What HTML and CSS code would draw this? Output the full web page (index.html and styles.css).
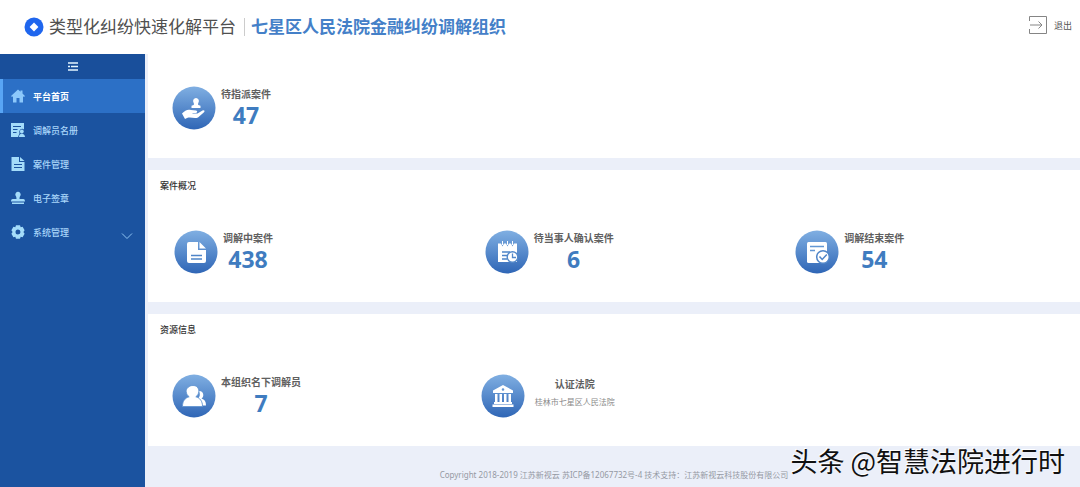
FILE: index.html
```
<!DOCTYPE html>
<html lang="zh-CN">
<head>
    <meta charset="UTF-8">
    <meta name="viewport" content="width=device-width, initial-scale=1.0">
    <title>类型化纠纷快速化解平台</title>
    <link rel="stylesheet" href="styles.css">
</head>
<body>

    <header class="header">
        <svg class="logo" viewBox="0 0 20 20">
            <circle cx="10" cy="10" r="9.5" fill="#1f66ee"/>
            <path d="M10 5.6 14.4 10 10 14.4 5.6 10Z" fill="#fff"/>
        </svg>
        <h1 class="title">类型化纠纷快速化解平台</h1>
        <span class="org">七星区人民法院金融纠纷调解组织</span>
        <a class="logout" href="#">
            <svg viewBox="0 0 18 18" fill="none" stroke="#858585">
                <path d="M.5 5V.5h17v17H.5V13M1 9h12M9.500 5.500 13 9l-3.500 3.500"/>
            </svg>
            退出
        </a>
    </header>

    <div class="layout">
        <aside class="sidebar">
            <button class="toggle" type="button" aria-label="收起菜单">
                <svg viewBox="0 0 10 9" fill="none" stroke="#e4f6ff" stroke-width="1.500">
                    <path d="M0 1h10M3 4.500h7M0 8h10M0 4.500h2"/>
                </svg>
            </button>
            <nav class="menu">
                <a class="menu-item active" href="#">
                    <svg viewBox="0 0 14 14">
                        <path d="M7 .5 0 7l1 1 1-.8V13.500h3.500V9h3v4.500H12V7.200l1 .8 1-1-2.500-2.400V1.500h-2v1.300Z"/>
                    </svg>
                    平台首页
                </a>
                <a class="menu-item" href="#">
                    <svg viewBox="0 0 14 14">
                        <path d="M0 0h13v6.500a3 3 0 0 0-4.500 3.700L7 14H0Z"/>
                        <circle cx="10.800" cy="8.500" r="1.900"/>
                        <path d="M8 14c0-2 .8-3.300 2.800-3.300S14 12 14 14Z"/>
                        <path d="M2 3.500h8M2 6.500h4.500M2 9.500h3.500" stroke="#1b53a0" stroke-width="1.200"/>
                    </svg>
                    调解员名册
                </a>
                <a class="menu-item" href="#">
                    <svg viewBox="0 0 14 14">
                        <path d="M.5 0H8v5h5.500v9H.5ZM9 0l4.500 4H9Z"/>
                        <path d="M3 7.500h8M3 10.500h8" stroke="#1b53a0" stroke-width="1.200"/>
                    </svg>
                    案件管理
                </a>
                <a class="menu-item" href="#">
                    <svg viewBox="0 0 14 14">
                        <path d="M7 .8a2.700 2.700 0 0 1 2.600 3.500C9 5.500 8.500 6 8.500 8h3.800c1 0 1.700.8 1.700 2.500H0C0 8.800.7 8 1.700 8h3.800c0-2-.5-2.500-1.100-3.700A2.700 2.700 0 0 1 7 .8ZM1 11.500h12V13H1Z"/>
                    </svg>
                    电子签章
                </a>
                <a class="menu-item" href="#">
                    <svg viewBox="0 0 14 14">
                        <path fill-rule="evenodd" d="M5 .3h4l.7 1.900 1.900-.4 2 3.400L12.400 7l1.200 1.800-2 3.400-1.900-.4L9 13.700H5l-.7-1.900-1.900.4-2-3.400L1.600 7 .4 5.200l2-3.400 1.900.4ZM7 4.500a2.500 2.500 0 1 0 0 5 2.500 2.500 0 0 0 0-5Z"/>
                    </svg>
                    系统管理
                    <svg class="arrow" viewBox="0 0 12 8">
                        <path d="m1 1.500 5 5 5-5"/>
                    </svg>
                </a>
            </nav>
        </aside>

        <!-- the round icons share this fill -->
        <svg class="defs">
            <linearGradient id="blue" x1="0" y1="0" x2="0" y2="1">
                <stop offset="0" stop-color="#80afe2"/>
                <stop offset="1" stop-color="#2f66b6"/>
            </linearGradient>
        </svg>

        <div class="content">
            <main class="panels">
                <section class="panel panel-first">
                    <div class="cards">
                        <div class="card">
                            <svg class="icon" viewBox="0 0 44 44">
                                <circle cx="22" cy="22" r="21.500" fill="url(#blue)"/>
                                <g fill="#fff">
                                    <path d="M24 12a3 3 0 0 1 2.500 4.500c-.6.900-.5 2-.2 2.500l2.200.8V22h-9v-2.200l2.200-.8c.3-.5.4-1.600-.2-2.500A3 3 0 0 1 24 12Z"/>
                                    <path d="M10 27.500c3-3.500 6-4.500 9-3.500l5 .5c1.800.3 1.500 2.300 0 2.400h-3.500v.6h5l5-3c1.600-.8 2.800.5 1.500 1.700L26 31.500c-4 1.500-7-1-11 .5l-2 1Z"/>
                                </g>
                            </svg>
                            <div class="info">
                                <div class="label">待指派案件</div>
                                <div class="count">47</div>
                            </div>
                        </div>
                    </div>
                </section>

                <section class="panel">
                    <h2 class="panel-title">案件概况</h2>
                    <div class="cards cards-wide">
                        <div class="card">
                            <svg class="icon" viewBox="0 0 44 44">
                                <circle cx="22" cy="22" r="21.500" fill="url(#blue)"/>
                                <path fill="#fff" d="M15 12h9v8h8v11a2 2 0 0 1-2 2H15a2 2 0 0 1-2-2V14a2 2 0 0 1 2-2ZM25.500 12l6.500 6.500h-6.500Z"/>
                                <path stroke="#4f85c8" stroke-width="1.500" d="M17 25.500h11M17 29h11"/>
                            </svg>
                            <div class="info">
                                <div class="label">调解中案件</div>
                                <div class="count">438</div>
                            </div>
                        </div>
                        <div class="card">
                            <svg class="icon" viewBox="0 0 44 44">
                                <circle cx="22" cy="22" r="21.500" fill="url(#blue)"/>
                                <path fill="#fff" d="M13 13.500h3l1.500 3 1.500-3h2l1.500 3 1.500-3h2l1.500 3 1.500-3h3V32H13Z"/>
                                <path stroke="#fff" d="M17.500 11v4M22.500 11v4M27.500 11v4"/>
                                <path stroke="#4f85c8" stroke-width="1.300" d="M17 22h8M17 25.500h5M17 29h5"/>
                                <circle cx="27.500" cy="27" r="5.300" fill="#fff" stroke="#5288ca" stroke-width="1.400"/>
                                <path fill="none" stroke="#5288ca" stroke-width="1.300" d="M27.500 23.500v4H31"/>
                            </svg>
                            <div class="info">
                                <div class="label">待当事人确认案件</div>
                                <div class="count">6</div>
                            </div>
                        </div>
                        <div class="card">
                            <svg class="icon" viewBox="0 0 44 44">
                                <circle cx="22" cy="22" r="21.500" fill="url(#blue)"/>
                                <rect x="12" y="12" width="20" height="21" rx="1.500" fill="#fff"/>
                                <path stroke="#6297d4" stroke-width="1.300" d="M15 16.500h14M15 20.500h5"/>
                                <circle cx="28" cy="27" r="6.300" fill="#fff" stroke="#4f85c8" stroke-width="1.500"/>
                                <path fill="none" stroke="#4f85c8" stroke-width="1.500" d="m24.500 26.500 2.700 3 4.600-5"/>
                            </svg>
                            <div class="info">
                                <div class="label">调解结束案件</div>
                                <div class="count">54</div>
                            </div>
                        </div>
                    </div>
                </section>

                <section class="panel">
                    <h2 class="panel-title">资源信息</h2>
                    <div class="cards">
                        <div class="card">
                            <svg class="icon" viewBox="0 0 44 44">
                                <circle cx="22" cy="22" r="21.500" fill="url(#blue)"/>
                                <g fill="#fff">
                                    <path d="M27 17c3 0 4.500 2 4.300 4.300-.1 1.500-.8 2.700-1.800 3.300 3 1 4.500 3 4.500 6.900h-3.500c0-3-1.500-5-4.500-6.500 2-2.500 2.500-5 1-8Z"/>
                                    <path stroke="#5a90cf" stroke-width=".8" d="M21 11.500c4 0 6 3 5.800 6-.2 2.400-1.500 4.300-3 5.300 4.200 1.200 6.700 4.200 6.700 9.700h-20c0-5.500 2.500-8.500 6.700-9.700-1.500-1-2.800-2.900-3-5.300-.2-3 2.800-6 6.800-6Z"/>
                                </g>
                            </svg>
                            <div class="info">
                                <div class="label">本组织名下调解员</div>
                                <div class="count">7</div>
                            </div>
                        </div>
                        <div class="card card-court">
                            <svg class="icon" viewBox="0 0 44 44">
                                <circle cx="22" cy="22" r="21.500" fill="url(#blue)"/>
                                <path fill="#fff" fill-rule="evenodd" d="m22 11 10 5.500V19H12v-2.500Zm0 3.200a1.300 1.300 0 1 0 0 2.600 1.300 1.300 0 0 0 0-2.600ZM14 20h2.500v8H14Zm4.500 0H21v8h-2.500Zm4.500 0h2.500v8H23Zm4.500 0H30v8h-2.500ZM13 28h18v2H13Zm-1.500 2.500h21V33h-21Z"/>
                            </svg>
                            <div class="info">
                                <div class="label">认证法院</div>
                                <div class="court">桂林市七星区人民法院</div>
                            </div>
                        </div>
                    </div>
                </section>
            </main>

            <footer class="footer">Copyright 2018-2019 江苏新视云 苏ICP备12067732号-4 技术支持：江苏新视云科技股份有限公司</footer>
        </div>
    </div>

    <div class="watermark">头条 @智慧法院进行时</div>

</body>
</html>
```
FILE: styles.css
```
* {
    box-sizing: border-box;
}
body {
    margin: 0;
    min-height: 100vh;
    display: flex;
    flex-direction: column;
    font-family: "Noto Sans", "Noto Sans CJK SC", sans-serif;
    font-size: 10px;
    color: #555;
    background: #fff;
}
a {
    color: inherit;
    text-decoration: none;
}
h1, h2 {
    margin: 0;
}

/* header */
.header {
    height: 54px;
    padding: 0 8px 0 24px;
    display: flex;
    align-items: center;
}
.logo {
    width: 20px;
    height: 20px;
    margin-right: 5px;
}
.title {
    font-size: 17px;
    line-height: 18px;
    font-weight: 400;
    color: #505050;
}
.org {
    margin-left: 8px;
    padding-left: 6px;
    border-left: 1px solid #ccc;
    font-size: 17px;
    line-height: 18px;
    font-weight: 700;
    color: #4480c8;
}
.logout {
    margin-left: auto;
    padding-bottom: 4px;
    display: flex;
    align-items: center;
    gap: 7px;
    font-size: 9px;
}
.logout svg {
    width: 18px;
    height: 18px;
}

/* sidebar */
.layout {
    flex: 1;
    display: flex;
}
.sidebar {
    width: 145px;
    flex: none;
    background: #1b53a0;
}
.toggle {
    width: 100%;
    height: 25px;
    padding: 0;
    display: flex;
    align-items: center;
    justify-content: center;
    border: none;
    background: #194f9b;
    cursor: pointer;
}
.toggle svg {
    width: 10px;
    height: 9px;
}
.menu {
    display: grid;
    grid-auto-rows: 34px;
}
.menu-item {
    padding: 0 12px 0 11px;
    display: flex;
    align-items: center;
    gap: 8px;
    font-size: 9px;
    font-weight: 500;
    color: #a9d6fa;
}
.menu-item svg {
    width: 14px;
    height: 14px;
    fill: #a4dcfa;
}
.menu-item.active {
    padding-left: 8px;
    border-left: 3px solid #58a5f5;
    background: #2c70c6;
    color: #fff;
    font-weight: 700;
}
.menu-item.active svg {
    fill: #8cc8fb;
}
.menu-item .arrow {
    width: 12px;
    height: 8px;
    margin: 8px 0 0 auto;
    fill: none;
    stroke: #8fc4f2;
}

/* content */
.defs {
    position: absolute;
    width: 0;
    height: 0;
}
.content {
    flex: 1;
    display: flex;
    flex-direction: column;
    padding-left: 3px;
    background: #ebeff9;
}
.panels {
    display: grid;
    gap: 12px;
}
.panel {
    padding: 8px 0 28px;
    background: #fff;
}
.panel-first {
    padding-top: 32px;
}
.panel-title {
    padding-left: 12px;
    font-size: 9px;
    line-height: 16px;
    font-weight: 500;
    color: #333;
}
.cards {
    padding-left: 24px;
    display: grid;
    grid-template-columns: 34% 34% 32%;
}
.panel-title + .cards {
    margin-top: 36px;
}
.cards-wide {
    padding-left: 26px;
    margin-right: -26px;
    grid-template-columns: repeat(3, 1fr);
}
.card {
    display: flex;
    gap: 5px;
}
.card-court {
    gap: 10px;
}
.card-court .info {
    padding-top: 2px;
}
.icon {
    width: 44px;
    height: 44px;
}
.info {
    text-align: center;
}
.label {
    font-size: 10px;
    line-height: 16px;
    font-weight: 700;
    color: #606060;
}
.count {
    font-size: 23px;
    line-height: 26px;
    font-weight: 700;
    color: #3f7cc0;
}
.court {
    font-size: 8px;
    line-height: 20px;
    color: #8a8a8a;
}
.footer {
    margin-top: auto;
    padding: 0 0 4px;
    font-size: 8px;
    line-height: 16px;
    text-align: center;
    color: #9599a3;
}

/* watermark */
.watermark {
    position: absolute;
    right: 15px;
    bottom: 8px;
    font-family: "Noto Sans CJK SC", sans-serif;
    font-size: 27px;
    line-height: 36px;
    color: #111;
    text-shadow: -1px -1px 0 #fff;
}
```
